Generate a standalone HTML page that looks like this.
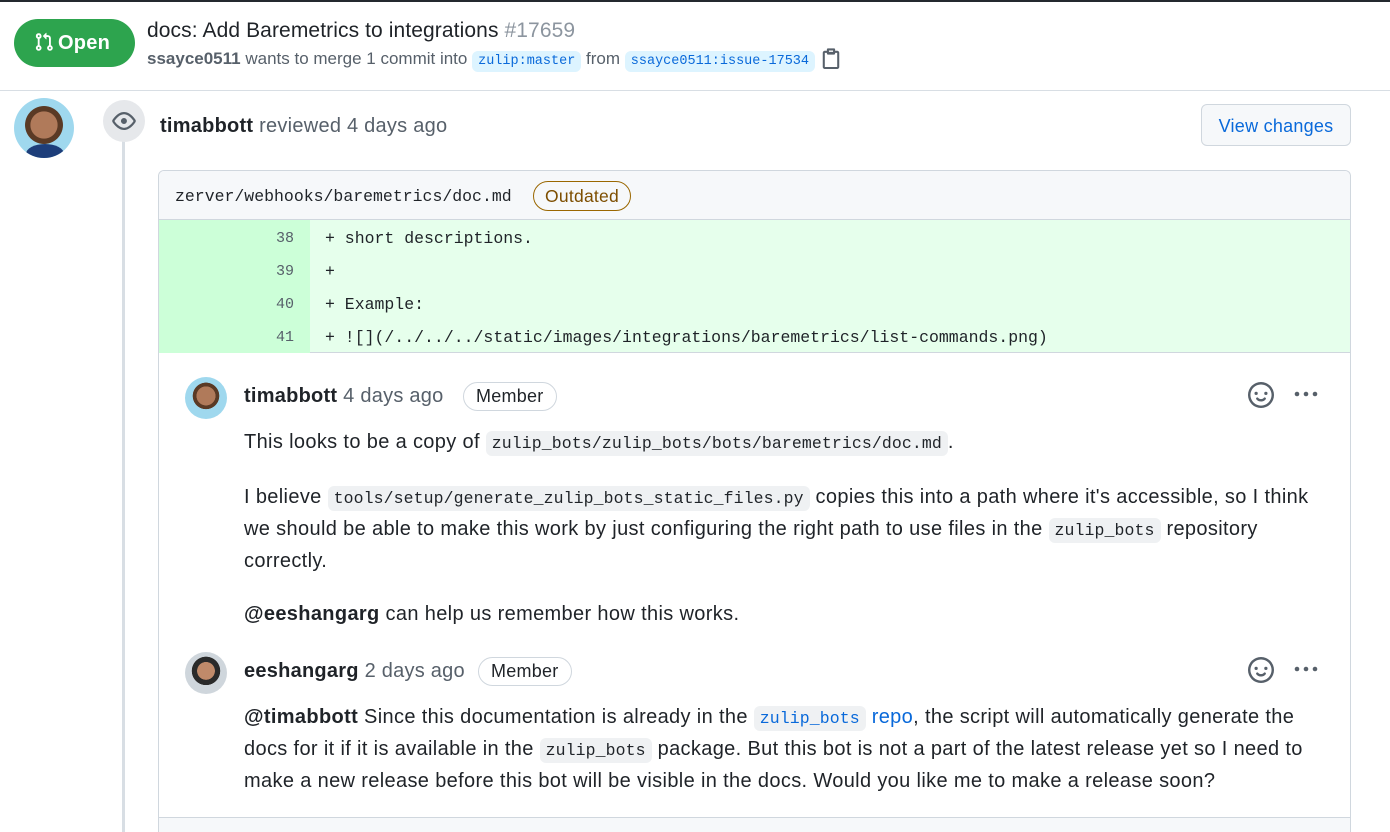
<!DOCTYPE html>
<html><head><meta charset="utf-8"><style>
*{box-sizing:border-box;margin:0;padding:0}
html,body{overflow:hidden}
body{width:1390px;height:832px;background:#fff;font-family:"Liberation Sans",sans-serif;color:#1f2328;position:relative;letter-spacing:0.25px}
.a{position:absolute}
.mono{font-family:"Liberation Mono",monospace;letter-spacing:0}
code{font-family:"Liberation Mono",monospace;font-size:16.5px;background:#eff1f3;border-radius:6px;padding:3px 6px;letter-spacing:0.1px}
.t{font-size:20px;line-height:31px;color:#1f2328;letter-spacing:0.35px}
.badge{border:1px solid #d0d7de;border-radius:20px;font-size:18px;padding:0 12px;height:29px;line-height:27px;color:#1f2328}
</style></head><body>
<div class="a" style="left:0;top:0;width:1390px;height:2px;background:#24292f"></div>
<div class="a" style="left:14px;top:19px;width:121px;height:48px;background:#2da44e;border-radius:24px;color:#fff;font-size:20px;font-weight:bold;line-height:48px;padding-left:20px">
<svg width="20" height="22" viewBox="0 0 16 16" style="vertical-align:-4px;margin-right:4px" fill="#fff"><path d="M1.5 3.25a2.25 2.25 0 1 1 3 2.122v5.256a2.251 2.251 0 1 1-1.5 0V5.372A2.25 2.25 0 0 1 1.5 3.25Zm5.677-.177L9.573.677A.25.25 0 0 1 10 .854V2.5h1A2.5 2.5 0 0 1 13.5 5v5.628a2.251 2.251 0 1 1-1.5 0V5a1 1 0 0 0-1-1h-1v1.646a.25.25 0 0 1-.427.177L7.177 3.427a.25.25 0 0 1 0-.354ZM3.750 2.5a.75.75 0 1 0 0 1.5.75.75 0 0 0 0-1.5Zm0 9.5a.75.75 0 1 0 0 1.5.75.75 0 0 0 0-1.5Zm8.25.75a.75.75 0 1 0 1.5 0 .75.75 0 0 0-1.5 0Z"/></svg>Open</div>
<div class="a" style="left:147px;top:19px;font-size:21px;letter-spacing:0.1px">docs: Add Baremetrics to integrations <span style="color:#8c959f">#17659</span></div>
<div class="a" style="left:147px;top:46px;font-size:17px;color:#57606a;line-height:26px;letter-spacing:0"><b style="color:#57606a">ssayce0511</b> wants to merge 1 commit into <span class="mono" style="background:#ddf4ff;color:#0969da;font-size:13.5px;padding:3px 6px;border-radius:6px">zulip:master</span> from <span class="mono" style="background:#ddf4ff;color:#0969da;font-size:13.5px;padding:3px 6px;border-radius:6px">ssayce0511:issue-17534</span></div>
<svg class="a" style="left:820px;top:46px" width="22" height="24" viewBox="0 0 16 16" fill="#57606a"><path d="M5.75 1a.75.75 0 0 0-.75.75v1H3.5A1.5 1.5 0 0 0 2 4.25v10.25A1.5 1.5 0 0 0 3.5 16h9a1.5 1.5 0 0 0 1.5-1.5V4.25a1.5 1.5 0 0 0-1.5-1.5H11v-1a.75.75 0 0 0-.75-.75Zm.75 1.5h3v1h-3ZM3.5 4.25H5v.5c0 .41.34.75.75.75h4.5a.75.75 0 0 0 .75-.75v-.5h1.5v10.25h-9Z"/></svg>
<div class="a" style="left:0;top:90px;width:1390px;height:1px;background:#d8dee4"></div>
<div class="a" style="left:14px;top:98px;width:60px;height:60px;border-radius:50%;background:radial-gradient(circle at 50% 45%,#b07a5a 0 30%,#5a3a25 31% 42%,#9fd8ee 43%);overflow:hidden"><div style="position:absolute;left:12px;top:46px;width:38px;height:20px;background:#1d3e7a;border-radius:50%"></div></div>
<div class="a" style="left:122px;top:140px;width:3px;height:692px;background:#d8dee4"></div>
<div class="a" style="left:103px;top:100px;width:42px;height:42px;border-radius:50%;background:#e6e8eb"></div>
<svg class="a" style="left:112px;top:109px" width="24" height="24" viewBox="0 0 16 16" fill="#57606a"><path d="M8 2c1.981 0 3.671.992 4.933 2.078 1.27 1.091 2.187 2.345 2.637 3.023a1.62 1.62 0 0 1 0 1.798c-.45.678-1.367 1.932-2.637 3.023C11.67 13.008 9.981 14 8 14c-1.981 0-3.671-.992-4.933-2.078C1.797 10.830.88 9.576.43 8.898a1.62 1.62 0 0 1 0-1.798c.45-.677 1.367-1.931 2.637-3.022C4.33 2.992 6.019 2 8 2ZM1.679 7.932a.12.12 0 0 0 0 .136c.411.622 1.241 1.75 2.366 2.717C5.176 11.758 6.527 12.5 8 12.5c1.473 0 2.825-.742 3.955-1.715 1.124-.967 1.954-2.096 2.366-2.717a.12.12 0 0 0 0-.136c-.412-.621-1.242-1.750-2.366-2.717C10.824 4.242 9.473 3.5 8 3.5c-1.473 0-2.825.742-3.955 1.715-1.124.967-1.954 2.096-2.366 2.717ZM8 10a2 2 0 1 1-.001-3.999A2 2 0 0 1 8 10Z"/></svg>
<div class="a" style="left:160px;top:115px;font-size:20px;color:#57606a"><b style="color:#1f2328">timabbott</b> reviewed 4 days ago</div>
<div class="a" style="left:1201px;top:104px;width:150px;height:42px;border:1px solid #d0d7de;border-radius:6px;background:#f6f8fa;color:#0969da;font-size:18px;line-height:42px;text-align:center">View changes</div>
<div class="a" style="left:158px;top:170px;width:1193px;height:662px;border:1px solid #d0d7de;border-bottom:none;border-radius:6px 6px 0 0;overflow:hidden">
 <div style="height:49px;background:#f6f8fa;border-bottom:1px solid #d0d7de;position:relative">
  <span class="a mono" style="left:16px;top:16px;font-size:16.5px">zerver/webhooks/baremetrics/doc.md</span>
  <span class="a" style="left:374px;top:10px;height:30px;border:1px solid #9a6700;border-radius:16px;color:#7d4e00;font-size:17.5px;line-height:28px;padding:0 11px">Outdated</span>
 </div>
 <div style="position:relative;height:133px;background:#e6ffec;border-bottom:1px solid #d0d7de">
  <div class="a" style="left:0;top:0;width:151px;height:133px;background:#ccffd8"></div>
  <div class="a mono" style="left:0;top:2px;width:135px;text-align:right;font-size:15px;color:#57606a;line-height:33px">38<br>39<br>40<br>41</div>
  <div class="a mono" style="left:166px;top:2px;font-size:16.5px;line-height:33px;white-space:pre">+ short descriptions.
+
+ Example:
+ ![](/../../../static/images/integrations/baremetrics/list-commands.png)</div>
 </div>
 <div style="position:relative;height:464px">
  <div class="a" style="left:26px;top:24px;width:42px;height:42px;border-radius:50%;background:radial-gradient(circle at 50% 45%,#b07a5a 0 30%,#5a3a25 31% 42%,#9fd8ee 43%)"></div>
  <div class="a" style="left:85px;top:32px;font-size:20px;color:#57606a"><b style="color:#1f2328">timabbott</b> 4 days ago</div>
  <div class="a badge" style="left:304px;top:29px">Member</div>
  <div class="a t" style="left:85px;top:74px;width:1080px">This looks to be a copy of <code>zulip_bots/zulip_bots/bots/baremetrics/doc.md</code>.</div>
  <div class="a t" style="left:85px;top:129px;width:1070px">I believe <code>tools/setup/generate_zulip_bots_static_files.py</code> copies this into a path where it's accessible, so I think we should be able to make this work by just configuring the right path to use files in the <code>zulip_bots</code> repository correctly.</div>
  <div class="a t" style="left:85px;top:246px"><b>@eeshangarg</b> can help us remember how this works.</div>
  <div class="a" style="left:26px;top:299px;width:42px;height:42px;border-radius:50%;background:radial-gradient(circle at 50% 45%,#c08a6a 0 28%,#2a2a2a 29% 45%,#cfd6dc 46%)"></div>
  <div class="a" style="left:85px;top:307px;font-size:20px;color:#57606a"><b style="color:#1f2328">eeshangarg</b> 2 days ago</div>
  <div class="a badge" style="left:319px;top:304px">Member</div>
  <div class="a t" style="left:85px;top:349px;width:1075px"><b>@timabbott</b> Since this documentation is already in the <code style="color:#0969da">zulip_bots</code> <span style="color:#0969da">repo</span>, the script will automatically generate the docs for it if it is available in the <code>zulip_bots</code> package. But this bot is not a part of the latest release yet so I need to make a new release before this bot will be visible in the docs. Would you like me to make a release soon?</div>
 </div>
 <div style="background:#f6f8fa;border-top:1px solid #d0d7de;height:15px"></div>
</div>
<svg class="a" style="left:1248px;top:382px" width="26" height="26" viewBox="0 0 16 16" fill="#57606a"><path d="M8 0a8 8 0 1 1 0 16A8 8 0 0 1 8 0ZM1.5 8a6.5 6.5 0 1 0 13 0 6.5 6.5 0 0 0-13 0Zm3.82 1.636a.75.75 0 0 1 1.038.175l.007.009c.103.118.22.222.35.31.264.178.683.37 1.285.37.602 0 1.02-.192 1.285-.371.13-.088.247-.192.35-.31l.007-.008a.75.75 0 0 1 1.222.87l-.022-.015c.02.013.021.015.021.015v.001l-.001.002-.002.003-.005.007-.014.019a2.066 2.066 0 0 1-.184.213c-.16.166-.338.316-.53.445-.63.418-1.37.638-2.127.629-.946 0-1.652-.308-2.126-.63a3.331 3.331 0 0 1-.715-.657l-.014-.02-.005-.006-.002-.003v-.002h-.001l.613-.432-.614.43a.75.75 0 0 1 .183-1.044ZM12 7a1 1 0 1 1-2 0 1 1 0 0 1 2 0ZM5 8a1 1 0 1 1 0-2 1 1 0 0 1 0 2Z"/></svg>
<svg class="a" style="left:1248px;top:657px" width="26" height="26" viewBox="0 0 16 16" fill="#57606a"><path d="M8 0a8 8 0 1 1 0 16A8 8 0 0 1 8 0ZM1.5 8a6.5 6.5 0 1 0 13 0 6.5 6.5 0 0 0-13 0Zm3.82 1.636a.75.75 0 0 1 1.038.175l.007.009c.103.118.22.222.35.31.264.178.683.37 1.285.37.602 0 1.02-.192 1.285-.371.13-.088.247-.192.35-.31l.007-.008a.75.75 0 0 1 1.222.87l-.022-.015c.02.013.021.015.021.015v.001l-.001.002-.002.003-.005.007-.014.019a2.066 2.066 0 0 1-.184.213c-.16.166-.338.316-.53.445-.63.418-1.37.638-2.127.629-.946 0-1.652-.308-2.126-.63a3.331 3.331 0 0 1-.715-.657l-.014-.02-.005-.006-.002-.003v-.002h-.001l.613-.432-.614.43a.75.75 0 0 1 .183-1.044ZM12 7a1 1 0 1 1-2 0 1 1 0 0 1 2 0ZM5 8a1 1 0 1 1 0-2 1 1 0 0 1 0 2Z"/></svg>
<svg class="a" style="left:1293px;top:384px" width="26" height="20" viewBox="0 0 26 20" fill="#57606a"><circle cx="4" cy="10" r="2.3"/><circle cx="13" cy="10" r="2.3"/><circle cx="22" cy="10" r="2.3"/></svg>
<svg class="a" style="left:1293px;top:659px" width="26" height="20" viewBox="0 0 26 20" fill="#57606a"><circle cx="4" cy="10" r="2.3"/><circle cx="13" cy="10" r="2.3"/><circle cx="22" cy="10" r="2.3"/></svg>
</body></html>
